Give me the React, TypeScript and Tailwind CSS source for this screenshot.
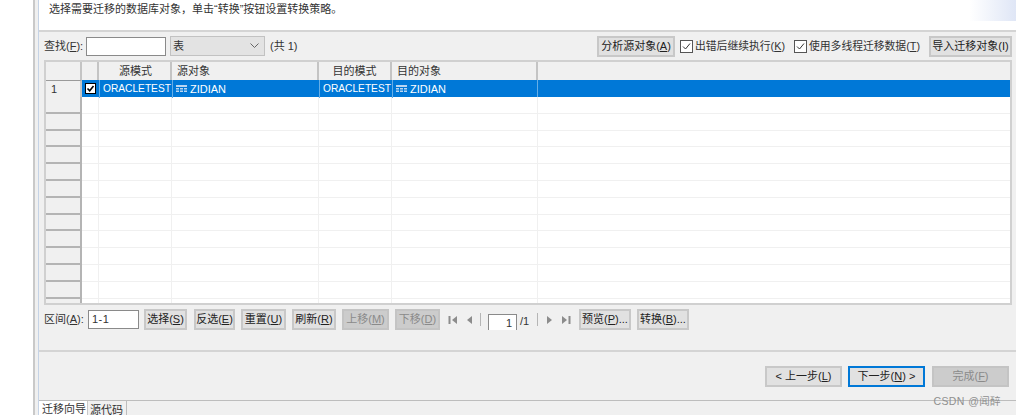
import React from 'react';

const font = { sans: "font-['Liberation_Sans','Noto_Sans_CJK_SC',sans-serif]" };

const Btn = ({ label, className = '', disabled = false }: { label: React.ReactNode; className?: string; disabled?: boolean }) => (
  <div
    className={`h-[21px] shrink-0 flex items-center justify-center border-2 whitespace-nowrap text-[11px] ${
      disabled ? 'bg-[#cccccc] border-[#c4c4c4] text-[#8a8a8a]' : 'bg-[#e1e1e1] border-[#c8c8c8] text-[#222222]'
    } ${className}`}
  >
    {label}
  </div>
);

const Check = () => (
  <div className="w-[13px] h-[13px] shrink-0 bg-white border border-[#555555] flex items-center justify-center">
    <svg width="11" height="11" viewBox="0 0 11 11" fill="none" stroke="#333333" strokeWidth="1">
      <path d="M2 5.5 L4.5 8 L9 2.5" />
    </svg>
  </div>
);

const Triangle = ({ dir, bar = false }: { dir: 'left' | 'right'; bar?: boolean }) => (
  <svg width="10" height="10" viewBox="0 0 10 10" fill="#8c8c8c">
    {dir === 'left' ? <path d="M9 1 V9 L4 5 Z" /> : <path d="M1 1 V9 L6 5 Z" />}
    {bar && (dir === 'left' ? <rect x="0.5" y="1" width="2" height="8" /> : <rect x="7.5" y="1" width="2" height="8" />)}
  </svg>
);

const TableIcon = () => (
  <svg width="11" height="7" viewBox="0 0 11 7" fill="#b9d6f2">
    <rect x="0" y="0" width="11" height="2" />
    <rect x="0" y="3" width="3" height="1.5" />
    <rect x="4" y="3" width="3" height="1.5" />
    <rect x="8" y="3" width="3" height="1.5" />
    <rect x="0" y="5.5" width="3" height="1.5" />
    <rect x="4" y="5.5" width="3" height="1.5" />
    <rect x="8" y="5.5" width="3" height="1.5" />
  </svg>
);

const columns = 'grid grid-cols-[36px_17px_73px_147px_73px_146px_1fr]';
const emptyRows = Array.from({ length: 13 }, (_, i) => i);

const HeaderCell = ({ children, className = '' }: { children?: React.ReactNode; className?: string }) => (
  <div className={`border-r-2 border-[#c4c4c4] flex items-center text-[11px] text-[#333333] ${className}`}>{children}</div>
);

const App = () => {
  return (
    <div className={`w-[1016px] h-[415px] overflow-hidden flex bg-white ${font.sans}`}>
      <div className="w-[33px] bg-white" />
      <div className="w-[6px] bg-[#f0f0f0] border-l-2 border-[#c9c9c9] border-r border-r-[#c5d3e6]" />

      <div className="flex-1 flex flex-col bg-[#f0f0f0] relative">
        <div className="h-[32px] bg-white border-b-2 border-[#d4d4d4] pl-[10px] text-[11px] text-[#333333] relative">
          <div className="pt-[1px] leading-[16px]">选择需要迁移的数据库对象，单击“转换”按钮设置转换策略。</div>
          <div className="absolute right-0 top-0 w-[46px] h-[21px] bg-gradient-to-r from-white to-[#dfe6f6]" />
        </div>

        <div className="h-[28px] flex items-center pl-[5px] text-[11px] text-[#333333]">
          <span className="w-[42px]">查找(<u>F</u>):</span>
          <div className="w-[80px] h-[19px] bg-white border border-[#8a8a8a]" />
          <div className="ml-[4px] w-[95px] h-[20px] bg-[#e3e3e3] border border-[#c2c2c2] flex items-center justify-between pl-[2px] pr-[5px]">
            <span>表</span>
            <svg width="9" height="6" viewBox="0 0 9 6" fill="none" stroke="#666666" strokeWidth="1">
              <path d="M0.5 0.5 L4.5 4.5 L8.5 0.5" />
            </svg>
          </div>
          <span className="ml-[5px]">(共 1)</span>
          <Btn className="ml-auto w-[78px]" label={<span>分析源对象(<u>A</u>)</span>} />
          <div className="ml-[5px] w-[106px] flex items-center gap-[2px] whitespace-nowrap text-[10.8px]">
            <Check />
            <span>出错后继续执行(<u>K</u>)</span>
          </div>
          <div className="ml-[8px] w-[127px] flex items-center gap-[2px] whitespace-nowrap text-[10.8px]">
            <Check />
            <span>使用多线程迁移数据(<u>T</u>)</span>
          </div>
          <Btn className="ml-[8px] mr-[4px] w-[83px]" label="导入迁移对象(I)" />
        </div>

        <div className="ml-[5px] mr-[4px] h-[245px] shrink-0 border-2 border-[#d0d0d0] bg-white overflow-hidden">
          <div className={`${columns} h-[18px] bg-[#f0f0f0]`}>
            <HeaderCell />
            <HeaderCell />
            <HeaderCell className="justify-center pl-[2px]">源模式</HeaderCell>
            <HeaderCell className="pl-[5px]">源对象</HeaderCell>
            <HeaderCell className="justify-center">目的模式</HeaderCell>
            <HeaderCell className="pl-[5px]">目的对象</HeaderCell>
            <div />
          </div>

          <div className={`${columns} h-[17px] bg-[#0078d7] text-white text-[11px]`}>
            <div className="bg-[#f0f0f0] text-[#333333] pl-[5px] flex items-center border-r-2 border-[#c4c4c4] border-t border-t-[#9a9a9a]">1</div>
            <div className="flex items-center justify-center">
              <div className="w-[11px] h-[11px] bg-black flex items-center justify-center">
                <svg width="9" height="9" viewBox="0 0 9 9">
                  <rect width="9" height="9" fill="white" />
                  <path d="M1.5 4.5 L3.7 6.7 L7.5 2" fill="none" stroke="black" strokeWidth="1.6" />
                </svg>
              </div>
            </div>
            <div className="flex items-center pl-[3px] border-l border-[#66aee7] whitespace-nowrap text-[10.2px]">ORACLETEST</div>
            <div className="flex items-center pl-[3px] gap-[3px] border-l border-[#66aee7]">
              <TableIcon />
              ZIDIAN
            </div>
            <div className="flex items-center pl-[3px] border-l border-[#66aee7] whitespace-nowrap text-[10.2px]">ORACLETEST</div>
            <div className="flex items-center pl-[3px] gap-[3px] border-l border-[#66aee7] border-r">
              <TableIcon />
              ZIDIAN
            </div>
            <div />
          </div>

          {emptyRows.map((row) => (
            <div key={row} className={`${columns} h-[16.8px]`}>
              <div className="bg-[#f0f0f0] border-r-2 border-b-2 border-[#b4b4b4]" />
              <div className="border-r border-b border-[#f0f0f0]" />
              <div className="border-r border-b border-[#f0f0f0]" />
              <div className="border-r border-b border-[#f0f0f0]" />
              <div className="border-r border-b border-[#f0f0f0]" />
              <div className="border-r border-b border-[#f0f0f0]" />
              <div className="border-b border-[#f0f0f0]" />
            </div>
          ))}
        </div>

        <div className="h-[45px] shrink-0 flex items-start pt-[4px] pl-[5px] text-[11px] text-[#333333]">
          <div className="h-[21px] flex items-center">
            <span className="w-[44px]">区间(<u>A</u>):</span>
            <div className="w-[51px] h-[19px] bg-white border border-[#8a8a8a] flex items-center pl-[3px] tracking-[0.5px]">1-1</div>
            <Btn className="ml-[5px] w-[43px]" label={<span>选择(<u>S</u>)</span>} />
            <Btn className="ml-[7px] w-[41px]" label={<span>反选(<u>E</u>)</span>} />
            <Btn className="ml-[6px] w-[45px]" label={<span>重置(<u>U</u>)</span>} />
            <Btn className="ml-[6px] w-[44px]" label={<span>刷新(<u>R</u>)</span>} />
            <Btn disabled className="ml-[6px] w-[47px]" label={<span>上移(<u>M</u>)</span>} />
            <Btn disabled className="ml-[6px] w-[45px]" label={<span>下移(<u>D</u>)</span>} />
            <div className="ml-[8px] flex items-center gap-[5px]">
              <Triangle dir="left" bar />
              <Triangle dir="left" />
            </div>
            <div className="ml-[7px] w-px h-[13px] bg-[#b5b5b5]" />
            <div className="ml-[7px] w-[29px] h-[16px] mt-[5px] bg-white border border-b-0 border-[#8a8a8a] text-right pr-[4px] leading-[17px]">1</div>
            <span className="ml-[3px] mt-[4px] w-[10px]">/1</span>
            <div className="ml-[7px] w-px h-[13px] bg-[#b5b5b5]" />
            <div className="ml-[8px] flex items-center gap-[5px]">
              <Triangle dir="right" />
              <Triangle dir="right" bar />
            </div>
            <Btn className="ml-[8px] w-[52px]" label={<span>预览(<u>P</u>)...</span>} />
            <Btn className="ml-[6px] w-[52px]" label={<span>转换(<u>B</u>)...</span>} />
          </div>
        </div>

        <div className="h-[2px] shrink-0 bg-[#d4d4d4]" />

        <div className="h-[48px] shrink-0 flex items-start justify-end pt-[14px] pr-[7px]">
          <Btn className="w-[77px]" label={<span>&lt; 上一步(<u>L</u>)</span>} />
          <Btn className="ml-[6px] w-[77px] !border-[#0078d7]" label={<span>下一步(<u>N</u>) &gt;</span>} />
          <Btn disabled className="ml-[7px] w-[77px]" label={<span>完成(<u>F</u>)</span>} />
        </div>

        <div className="h-px shrink-0 bg-[#bdbdbd]" />

        <div className="flex-1 flex text-[11px] text-[#333333] leading-[12px] overflow-hidden">
          <div className="w-[49px] bg-white border-r border-[#c8c8c8] pl-[3px] pt-[3px] -mt-px">迁移向导</div>
          <div className="w-[39px] border-r border-[#bdbdbd] pl-[2px] pt-[3px]">源代码</div>
        </div>

        <span className="absolute right-[15px] top-[395px] text-[10.5px] leading-[12px] tracking-[0.4px] whitespace-pre text-[#8f8f8f]">CSDN @闻醉</span>
      </div>
    </div>
  );
};

export default App;
